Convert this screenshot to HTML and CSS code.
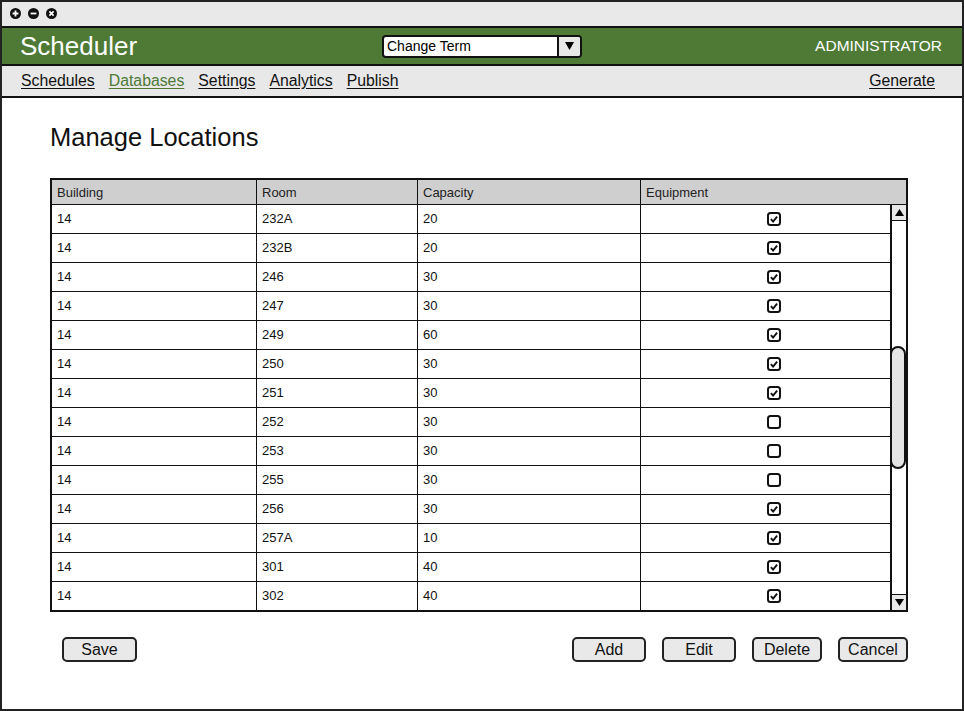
FILE: index.html
```html
<!DOCTYPE html>
<html lang="en">
<head>
<meta charset="utf-8">
<title>Scheduler - Manage Locations</title>
<link rel="stylesheet" href="styles.css">
</head>
<body>
<div class="window">
  <div class="titlebar">
    <span class="wbtn"><svg width="11" height="11" viewBox="0 0 11 11"><circle cx="5.5" cy="5.5" r="5.5" fill="#111"/><path d="M5.5 2.6v5.8M2.6 5.5h5.8" stroke="#fff" stroke-width="1.8"/></svg></span>
    <span class="wbtn"><svg width="11" height="11" viewBox="0 0 11 11"><circle cx="5.5" cy="5.5" r="5.5" fill="#111"/><path d="M2.6 5.5h5.8" stroke="#fff" stroke-width="1.8"/></svg></span>
    <span class="wbtn"><svg width="11" height="11" viewBox="0 0 11 11"><circle cx="5.5" cy="5.5" r="5.5" fill="#111"/><path d="M3.4 3.4l4.2 4.2M7.6 3.4l-4.2 4.2" stroke="#fff" stroke-width="1.7"/></svg></span>
  </div>
  <header class="appbar">
    <div class="brand">Scheduler</div>
    <div class="term-select">
      <span class="term-label">Change Term</span>
      <span class="term-arrow"><svg width="9" height="8" viewBox="0 0 9 8"><path d="M0 0h9L4.5 8z" fill="#000"/></svg></span>
    </div>
    <div class="user">ADMINISTRATOR</div>
  </header>
  <nav class="nav">
    <div class="nav-links">
      <a class="nav-link">Schedules</a>
      <a class="nav-link active">Databases</a>
      <a class="nav-link">Settings</a>
      <a class="nav-link">Analytics</a>
      <a class="nav-link">Publish</a>
    </div>
    <a class="nav-link">Generate</a>
  </nav>
  <main class="content">
    <h1 class="page-title">Manage Locations</h1>
    <div class="datagrid">
      <div class="grid-head">
        <div class="hcell">Building</div>
        <div class="hcell">Room</div>
        <div class="hcell">Capacity</div>
        <div class="hcell last">Equipment</div>
      </div>
      <div class="grid-body">
        <div class="rows" id="rows"></div>
        <div class="scrollbar">
          <div class="sb-btn sb-up"><svg width="9" height="7" viewBox="0 0 9 7"><path d="M0 7h9L4.5 0z" fill="#000"/></svg></div>
          <div class="sb-track"><div class="sb-thumb"></div></div>
          <div class="sb-btn sb-down"><svg width="9" height="7" viewBox="0 0 9 7"><path d="M0 0h9L4.5 7z" fill="#000"/></svg></div>
        </div>
      </div>
    </div>
    <div class="actions">
      <button class="btn w75">Save</button>
      <div class="btn-group">
        <button class="btn w74">Add</button>
        <button class="btn w74">Edit</button>
        <button class="btn w70">Delete</button>
        <button class="btn w70">Cancel</button>
      </div>
    </div>
  </main>
</div>
<script>
(function () {
  var data = [
    ["14","232A","20",1],["14","232B","20",1],["14","246","30",1],["14","247","30",1],
    ["14","249","60",1],["14","250","30",1],["14","251","30",1],["14","252","30",0],
    ["14","253","30",0],["14","255","30",0],["14","256","30",1],["14","257A","10",1],
    ["14","301","40",1],["14","302","40",1]
  ];
  var checked = '<svg class="cb" width="14" height="14" viewBox="0 0 14 14"><rect x="1" y="1" width="12" height="12" rx="2.5" fill="#fff" stroke="#111" stroke-width="2"/><path d="M3.9 7.2l2.2 2.4 4-5" fill="none" stroke="#111" stroke-width="1.9"/></svg>';
  var unchecked = '<svg class="cb" width="14" height="14" viewBox="0 0 14 14"><rect x="1" y="1" width="12" height="12" rx="2.5" fill="#fff" stroke="#111" stroke-width="2"/></svg>';
  var html = '';
  data.forEach(function (r) {
    html += '<div class="row"><div class="cell">' + r[0] + '</div><div class="cell">' + r[1] +
      '</div><div class="cell">' + r[2] + '</div><div class="cell check">' + (r[3] ? checked : unchecked) + '</div></div>';
  });
  document.getElementById('rows').innerHTML = html;
})();
</script>
</body>
</html>
```

FILE: styles.css
```css
* { box-sizing: border-box; }
html, body { margin: 0; padding: 0; background: #fff; }
body { font-family: "Liberation Sans", Arial, sans-serif; color: #111; }

.window {
  width: 964px;
  height: 711px;
  border: 2px solid #222;
  display: flex;
  flex-direction: column;
  background: #fff;
}

.titlebar {
  height: 26px;
  background: #e9e9e9;
  border-bottom: 2px solid #111;
  display: flex;
  align-items: center;
  gap: 7px;
  padding-left: 8px;
  padding-bottom: 1px;
}
.wbtn { display: block; width: 11px; height: 11px; }
.wbtn svg { display: block; }

.appbar {
  height: 38px;
  background: #4e7a36;
  border-bottom: 2px solid #111;
  display: grid;
  grid-template-columns: 1fr auto 1fr;
  align-items: center;
  color: #fff;
}
.brand { font-size: 26px; padding-left: 18px; }
.user { justify-self: end; font-size: 15.5px; padding-right: 20px; }

.term-select {
  width: 200px;
  height: 23px;
  background: #fff;
  border: 2px solid #111;
  border-radius: 4px;
  display: flex;
  align-items: stretch;
  color: #000;
  overflow: hidden;
}
.term-label { flex: 1; font-size: 14px; line-height: 19px; padding-left: 3px; }
.term-arrow {
  width: 23px;
  border-left: 2px solid #111;
  background: #e8e8e8;
  display: flex;
  align-items: center;
  justify-content: center;
}

.nav {
  height: 32px;
  background: #e8e8e8;
  border-bottom: 2px solid #111;
  display: flex;
  align-items: center;
  justify-content: space-between;
  padding: 0 27px 0 19px;
}
.nav-links { display: flex; gap: 14px; }
.nav-link { font-size: 15.8px; color: #111; text-decoration: underline; text-underline-offset: 2px; }
.nav-link.active { color: #4e7a36; }

.content { padding: 24px 54px 0 48px; }
.page-title {
  margin: 0;
  font-weight: normal;
  font-size: 25.5px;
  line-height: 30px;
  color: #111;
}

.datagrid {
  margin-top: 26px;
  border: 2px solid #111;
  font-size: 13px;
}
.grid-head {
  display: grid;
  grid-template-columns: 205px 161px 223px 1fr;
  height: 25px;
  background: #cfcfcf;
  border-bottom: 1px solid #111;
}
.hcell {
  border-right: 1px solid #111;
  padding-left: 5px;
  line-height: 25px;
  color: #222;
}
.hcell.last { border-right: 0; }

.grid-body { display: flex; }
.rows { flex: 1; }
.row {
  display: grid;
  grid-template-columns: 205px 161px 223px 1fr;
  height: 29px;
  border-bottom: 1px solid #111;
}
.row:last-child { border-bottom: 0; height: 28px; }
.cell {
  border-right: 1px solid #111;
  padding-left: 5px;
  line-height: 28px;
}
.cell.check {
  border-right: 0;
  padding-left: 17px;
  display: flex;
  align-items: center;
  justify-content: center;
}
.cb { display: block; }

.scrollbar {
  width: 16px;
  border-left: 2px solid #111;
  display: flex;
  flex-direction: column;
}
.sb-btn {
  height: 16px;
  background: #e8e8e8;
  display: flex;
  align-items: center;
  justify-content: center;
}
.sb-up { border-bottom: 1px solid #111; }
.sb-down { border-top: 1px solid #111; }
.sb-track { flex: 1; }
.sb-thumb {
  margin: 125px 0 0 -2px;
  width: 16px;
  height: 123px;
  border: 2px solid #111;
  border-radius: 8px;
  background: #e4e4e4;
}

.actions {
  margin-top: 25px;
  display: flex;
  justify-content: space-between;
  padding-left: 12px;
}
.btn-group { display: flex; gap: 16px; }
.btn {
  height: 25px;
  border: 2px solid #222;
  border-radius: 5px;
  background: #e9e9e9;
  font-family: "Liberation Sans", Arial, sans-serif;
  font-size: 16px;
  color: #111;
  padding: 0;
  line-height: 19px;
}
.w75 { width: 75px; }
.w74 { width: 74px; }
.w70 { width: 70px; }
```
